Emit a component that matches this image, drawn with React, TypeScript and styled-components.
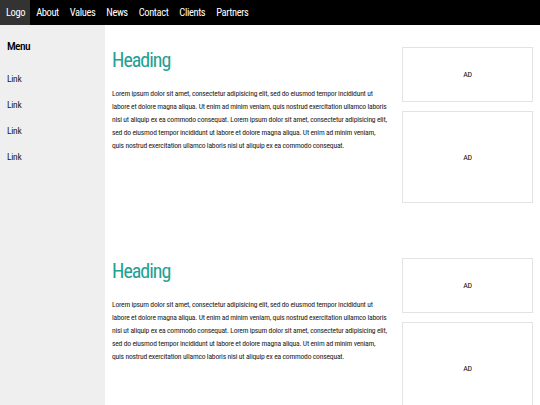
import styled, { createGlobalStyle } from 'styled-components';

const GlobalStyle = createGlobalStyle`
    html, body {
        margin: 0;
        padding: 0;
        background: #ffffff;
        font-family: Roboto, "Liberation Sans", sans-serif;
        font-stretch: 75%;
        color: #000000;
    }
    body {
        height: 405px;
        overflow: hidden;
    }
`;

const TopBar = styled.nav`
    display: flex;
    height: 25px;
    background: #000000;
`;

const NavItem = styled.a<{ $active?: boolean }>`
    display: flex;
    align-items: center;
    padding: 0 5px 0 6px;
    font-size: 10.5px;
    letter-spacing: -0.4px;
    color: #ffffff;
    background: ${p => (p.$active ? '#333333' : 'transparent')};
`;

const Layout = styled.div`
    display: grid;
    grid-template-columns: 105px 1fr;
    height: 380px;
`;

const Sidebar = styled.aside`
    background: #efefef;
    padding: 13px 7px 0;
`;

const MenuTitle = styled.h4`
    margin: 0 0 18px;
    font-size: 11.5px;
    letter-spacing: -0.6px;
    font-weight: 500;
    line-height: 16px;
`;

const MenuLink = styled.a`
    display: block;
    font-size: 9.5px;
    letter-spacing: -0.3px;
    line-height: 14px;
    margin-bottom: 12px;
    color: #222222;
`;

const Content = styled.main`
    display: flex;
    flex-direction: column;
`;

const Section = styled.section`
    display: grid;
    grid-template-columns: 1fr 145px;
    flex: 0 0 211px;
    padding-top: 22px;
    box-sizing: border-box;
`;

const Article = styled.div`
    padding: 0 7px;
`;

const Heading = styled.h2`
    margin: 1px 0 15px;
    font-size: 20px;
    letter-spacing: -1px;
    line-height: 24px;
    font-weight: 400;
    color: #23a093;
`;

const Body = styled.p`
    margin: 0;
    font-size: 7.6px;
    letter-spacing: -0.2px;
    line-height: 13px;
    color: #222222;
`;

const AdColumn = styled.div`
    display: flex;
    flex-direction: column;
    gap: 9px;
    padding: 0 7px;
`;

const AdBox = styled.div<{ $h: number }>`
    flex: 0 0 ${p => p.$h}px;
    box-sizing: border-box;
    border: 1px solid #e3e3e3;
    display: flex;
    align-items: center;
    justify-content: center;
    font-size: 8px;
    letter-spacing: -0.3px;
    color: #111111;
`;

const navItems = ['About', 'Values', 'News', 'Contact', 'Clients', 'Partners'];

const lorem =
    'Lorem ipsum dolor sit amet, consectetur adipisicing elit, sed do eiusmod tempor incididunt ut labore et dolore magna aliqua. Ut enim ad minim veniam, quis nostrud exercitation ullamco laboris nisi ut aliquip ex ea commodo consequat. Lorem ipsum dolor sit amet, consectetur adipisicing elit, sed do eiusmod tempor incididunt ut labore et dolore magna aliqua. Ut enim ad minim veniam, quis nostrud exercitation ullamco laboris nisi ut aliquip ex ea commodo consequat.';

const ContentSection = () => (
    <Section>
        <Article>
            <Heading>Heading</Heading>
            <Body>{lorem}</Body>
        </Article>
        <AdColumn>
            <AdBox $h={55}>AD</AdBox>
            <AdBox $h={92}>AD</AdBox>
        </AdColumn>
    </Section>
);

export default function App() {
    return (
        <>
            <GlobalStyle />
            <TopBar>
                <NavItem $active>Logo</NavItem>
                {navItems.map(item => (
                    <NavItem key={item}>{item}</NavItem>
                ))}
            </TopBar>
            <Layout>
                <Sidebar>
                    <MenuTitle>Menu</MenuTitle>
                    {[1, 2, 3, 4].map(i => (
                        <MenuLink key={i}>Link</MenuLink>
                    ))}
                </Sidebar>
                <Content>
                    <ContentSection />
                    <ContentSection />
                </Content>
            </Layout>
        </>
    );
}
